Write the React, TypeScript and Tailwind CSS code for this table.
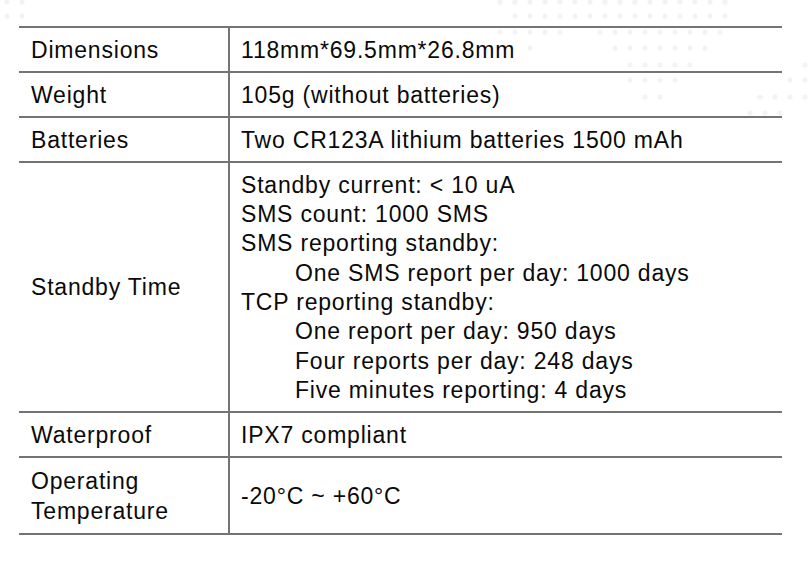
const dotRows: [number, number[]][] = [
  [2, [7, 22, ...range(500, 733, 15)]],
  [16, [7, 22, ...range(515, 735, 15)]],
  [32, [...range(500, 560, 15), ...range(600, 725, 15)]],
  [48, [530, ...range(615, 710, 15)]],
  [65, [...range(630, 695, 15), 805]],
  [80, [...range(630, 680, 15), 790, 805]],
  [97, [645, 660, 760, 775, 790, 805]],
  [113, [750, 765, 780]],
]

function range(from: number, to: number, step: number) {
  const out: number[] = []
  for (let v = from; v <= to; v += step) out.push(v)
  return out
}

type Row = { label: string[]; value: { text: string; indent?: boolean }[]; h: string }

const rows: Row[] = [
  { label: ['Dimensions'], value: [{ text: '118mm*69.5mm*26.8mm' }], h: 'h-[45px]' },
  { label: ['Weight'], value: [{ text: '105g (without batteries)' }], h: 'h-[45px]' },
  { label: ['Batteries'], value: [{ text: 'Two CR123A lithium batteries 1500 mAh' }], h: 'h-[45px]' },
  {
    label: ['Standby Time'],
    value: [
      { text: 'Standby current: < 10 uA' },
      { text: 'SMS count: 1000 SMS' },
      { text: 'SMS reporting standby:' },
      { text: 'One SMS report per day: 1000 days', indent: true },
      { text: 'TCP reporting standby:' },
      { text: 'One report per day: 950 days', indent: true },
      { text: 'Four reports per day: 248 days', indent: true },
      { text: 'Five minutes reporting: 4 days', indent: true },
    ],
    h: 'h-[250px]',
  },
  { label: ['Waterproof'], value: [{ text: 'IPX7 compliant' }], h: 'h-[45px]' },
  { label: ['Operating', 'Temperature'], value: [{ text: '-20°C ~ +60°C' }], h: 'h-[75px]' },
]

export default function App() {
  return (
    <div className="relative h-[565px] w-[810px] overflow-hidden bg-white">
      {/* faint dotted backdrop */}
      <svg className="absolute left-0 top-0" width="810" height="130">
        {dotRows.map(([y, xs]) =>
          xs.map((x) => <circle key={`${x}-${y}`} cx={x} cy={y} r="2.6" fill="#f3f3f3" />)
        )}
      </svg>

      <div className="relative ml-[19px] mt-[26px] w-[763px] font-['Liberation_Sans',Arial,sans-serif] text-[23px] tracking-[0.8px] text-[#0a0a0a]">
        {rows.map((row, i) => (
          <div
            key={row.label.join(' ')}
            className={`grid grid-cols-[211px_1fr] border-t-2 border-[#747474] ${row.h} ${
              i === rows.length - 1 ? 'box-content border-b-2' : ''
            }`}
          >
            <div className="flex flex-col justify-center border-r-2 border-[#747474] pl-[12px] pt-[2px] leading-[29.5px]">
              {row.label.map((l) => (
                <span key={l}>{l}</span>
              ))}
            </div>
            <div className="flex flex-col justify-center pl-[11px] pt-[2px] leading-[29.3px]">
              {row.value.map((v) => (
                <span key={v.text} className={v.indent ? 'pl-[54px]' : ''}>
                  {v.text}
                </span>
              ))}
            </div>
          </div>
        ))}
      </div>
    </div>
  )
}
